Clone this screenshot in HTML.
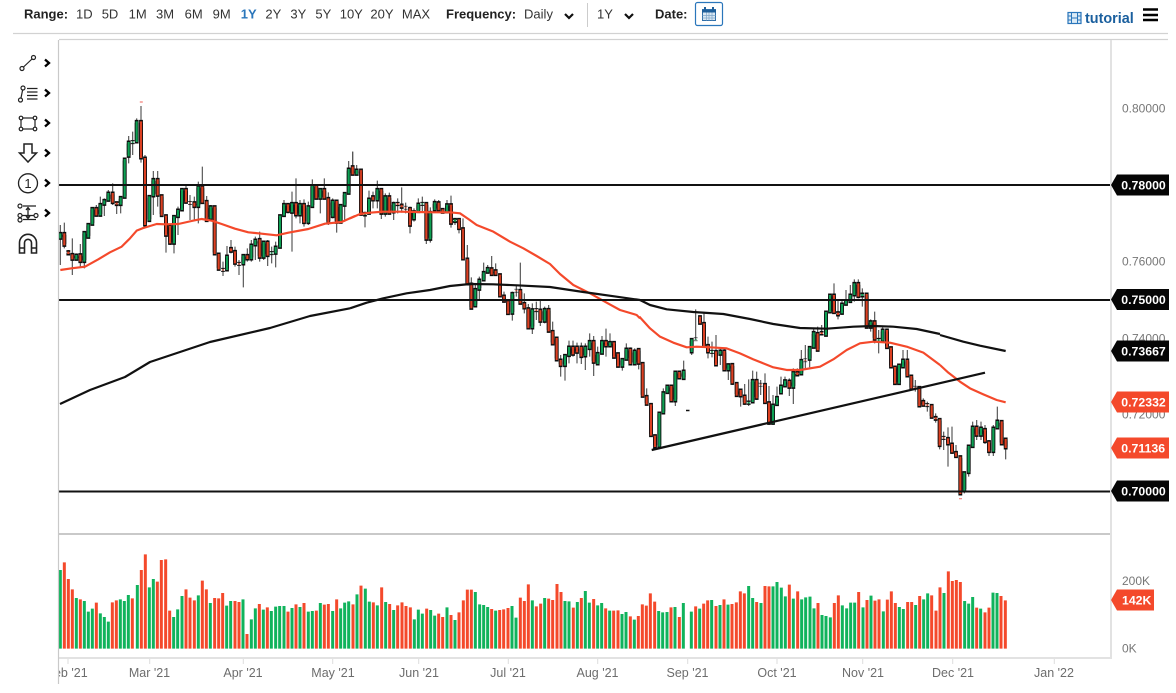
<!DOCTYPE html>
<html><head><meta charset="utf-8"><title>Chart</title>
<style>
html,body{margin:0;padding:0;background:#fff;width:1176px;height:693px;overflow:hidden}
svg{position:absolute;left:0;top:0;display:block}
text{font-family:"Liberation Sans",sans-serif}
.t{font-size:13px;fill:#333;text-anchor:middle}
.b{font-size:13px;font-weight:bold;fill:#222}
.a{font-size:12px;fill:#777}
.m{font-size:12.5px;fill:#6d6d6d;text-anchor:middle}
.w{font-size:12.3px;font-weight:bold;fill:#fff}
.i{fill:none;stroke:#222;stroke-width:1.2}
</style></head><body>
<svg width="1176" height="693" viewBox="0 0 1176 693" xmlns="http://www.w3.org/2000/svg">
<defs>
<filter id="s" x="0" y="0" width="100%" height="100%" filterUnits="userSpaceOnUse"><feGaussianBlur stdDeviation=".35"/></filter>
<g id="U" fill="none">
<path transform="translate(55 90) scale(.33333)" d="M16 430V445M64 495V508M88 427V515M100 403V442M112 355V403M136 343V376M148 331V343M160 309V331M197 322V344M209 207V322M221 156V199M233 155V158M245 94V156M283 319V392M295 268V318M357 379V460M369 360V380M381 298V360M430 290V350M467 350V386M516 498V540M565 496V522M589 465V507M601 450V465M626 456V502M650 488V491M662 471V490M675 377V472M687 343V377M711 340V367M735 343V375M760 350V398M772 287V350M796 298V325M833 333V380M857 346V397M869 310V346M881 237V310"/>
<path transform="translate(350 150) scale(.33333)" d="M20 60V73M45 190V195M57 147V190M82 118V150M106 140V190M131 160V186M192 185V207M205 162V185M217 160V163M241 187V268M254 157V180M291 164V186M315 208V215M376 418V468M388 390V418M401 367V390M413 355V367M487 430V490M547 479V534M584 478V514"/>
<path transform="translate(540 320) scale(.33333)" d="M75 106V137M87 81V107M136 81V108M149 64V86M173 100V132M186 64V100M210 67V78M247 118V139M259 87V118M284 93V132M358 279V380M370 218V279M382 198V218M406 156V243M431 153V176"/>
<path transform="translate(640 270) scale(.33333)" d="M155 208V246M167 207V209M216 244V247M241 243V253M265 284V300M326 396V400M338 331V396M399 405V460M411 382V404M423 348V369M435 332V348M460 307V352M484 271V312M509 232V268M521 187V232M558 126V196M570 75V126M606 102V130M618 93V103M631 75V95M643 40V75M667 72V78M692 155V172M716 208V212M728 180V212M777 285V341M789 270V291"/>
<path transform="translate(880 330) scale(.33333)" d="M253 428V482M266 348V428M278 291V350M303 294V316M340 294V365M352 273V294"/>
</g>
<g id="D" fill="none">
<path transform="translate(55 90) scale(.33333)" d="M28 430V466M40 485V492M52 493V508M76 494V515M124 355V376M173 309V338M185 338V344M258 94V204M270 204V405M308 268V316M320 317V377M333 377V436M345 408V460M393 298V337M405 338V340M418 338V350M442 290V338M455 334V392M479 350V492M491 492V538M504 538V541M528 475V484M540 484V520M552 520V523M577 496V507M614 448V502M638 456V497M699 343V365M723 340V375M747 343V398M784 287V325M808 298V325M820 325V398M845 333V397M893 230V253"/>
<path transform="translate(350 150) scale(.33333)" d="M33 60V193M69 140V150M94 118V190M118 140V190M143 160V164M155 165V172M167 172V174M180 175V226M229 160V268M266 158V180M278 178V187M303 164V220M327 208V236M339 236V327M352 327V402M364 402V475M425 356V374M437 362V374M450 374V438M462 438V454M474 454V491M499 421V423M511 421V460M523 460V474M535 476V534M559 479V482M571 480V514M596 478V544M608 544V582"/>
<path transform="translate(540 320) scale(.33333)" d="M50 54V120M62 120V137M99 81V103M111 81V97M124 81V110M161 64V127M198 64V78M222 67V112M234 101V139M271 87V132M296 88V130M308 130V229M320 229V253M333 253V347M345 347V381M394 198V243M418 156V174"/>
<path transform="translate(640 270) scale(.33333)" d="M180 140V160M192 160V228M204 226V246M228 244V285M253 243V300M277 283V340M290 340V377M302 360V378M314 378V400M350 331V385M362 343V345M375 343V398M387 398V460M448 333V352M472 307V315M496 270V272M533 190V241M545 187V192M582 75V128M594 128V135M655 40V80M680 72V172M704 155V208M741 180V233M753 233V291M765 291V341M802 270V318M814 318V355M826 352V354M838 352V408M850 394V406M862 404V407M875 406V442M887 442V448"/>
<path transform="translate(880 330) scale(.33333)" d="M179 268V347M191 322V325M204 325V342M216 342V367M228 367V380M241 380V492M290 291V316M315 298V335M327 335V365M365 274V342M377 327V354"/>
</g>
</defs>

<!-- frame -->
<path d="M13 33.5H1168M59 39.5H1168" stroke="#d2d2d2" stroke-width="1.2" fill="none"/>

<!-- toolbar -->
<text class="b" x="24" y="18.5">Range:</text>
<text class="t" x="84.3" y="18.5">1D</text><text class="t" x="110" y="18.5">5D</text><text class="t" x="137.7" y="18.5">1M</text><text class="t" x="165" y="18.5">3M</text><text class="t" x="193.7" y="18.5">6M</text><text class="t" x="221.7" y="18.5">9M</text>
<text class="t" x="248.7" y="18.5" style="font-weight:bold;fill:#2a76bb">1Y</text>
<text class="t" x="273.3" y="18.5">2Y</text><text class="t" x="298.3" y="18.5">3Y</text><text class="t" x="323.3" y="18.5">5Y</text><text class="t" x="351.3" y="18.5">10Y</text><text class="t" x="382" y="18.5">20Y</text><text class="t" x="416" y="18.5">MAX</text>
<text class="b" x="446" y="18.5">Frequency:</text>
<text class="t" x="538.5" y="18.5">Daily</text>
<path d="M565 14l4 4 4-4M625 14l4 4 4-4" fill="none" stroke="#111" stroke-width="2.2"/>
<path d="M587.5 3V27" stroke="#ccc" stroke-width="1"/>
<text class="t" x="605" y="18.5">1Y</text>
<text class="b" x="655" y="18.5">Date:</text>
<rect x="695.5" y="2.5" width="27" height="23" rx="2" fill="#fff" stroke="#2a76bb" stroke-width="1.2"/>
<rect x="702.5" y="9.5" width="13" height="11" fill="#dbe8f3" stroke="#2f6ea8" stroke-width="1"/>
<path d="M702 10h14v2.5h-14zM704 7h2v3h-2zM712 7h2v3h-2z" fill="#1f5f9a"/>
<path d="M702.5 15.5h13M702.5 18h13M706.5 12.5v8M709 12.5v8M712 12.5v8" stroke="#7fa6c9" stroke-width=".7" fill="none"/>

<rect x="1068" y="12.5" width="13" height="11" fill="#dcebf6" stroke="#2a76bb" stroke-width="1.2"/>
<path d="M1071.5 12.5v11M1077.5 12.5v11M1068 16h3.5M1068 20h3.5M1077.5 16h3.5M1077.5 20h3.5M1071.5 18h6" stroke="#2a76bb" stroke-width="1" fill="none"/>
<text x="1085" y="23" style="font-size:14.4px;font-weight:bold;fill:#1a5f9e">tutorial</text>
<path d="M1143 9.5h15M1143 15h15M1143 20h15" stroke="#000" stroke-width="2.6" fill="none"/>

<!-- left tools -->
<g class="i">
<circle cx="22" cy="68.5" r="2"/><circle cx="33.5" cy="57.5" r="2"/><path d="M23.5 67L32 59"/>
<circle cx="20.5" cy="100" r="2"/><circle cx="23" cy="88" r="2"/><path d="M21 98L22.6 90M27 88.5h10.5M27 92h10.5M27 95.5h10.5M27 99h10.5"/>
<rect x="21" y="118" width="14" height="11"/><circle cx="21" cy="118" r="1.8" fill="#fff"/><circle cx="35" cy="118" r="1.8" fill="#fff"/><circle cx="21" cy="129" r="1.8" fill="#fff"/><circle cx="35" cy="129" r="1.8" fill="#fff"/>
<path d="M24 144H32V153H36.5L28 162L19.5 153H24Z" stroke-width="1.5"/>
<circle cx="28" cy="183.3" r="9.5" stroke-width="1.3"/>
<circle cx="20" cy="206" r="2"/><circle cx="20" cy="215.5" r="2"/><circle cx="20" cy="220" r="2"/><circle cx="36" cy="215.5" r="2"/>
<path d="M23 206H36M23 219.5H36M22 215.5H34"/><path d="M28 208V218M26 210l2-2.5 2 2.5M26 216l2 2.5 2-2.5" stroke-width="1.3"/>
<path d="M19.5 253V242.8a8.5 8.5 0 0 1 17 0V253H31.5V242.8a3.5 3.5 0 0 0-7 0V253Z" stroke-width="1.6"/><path d="M19.5 248H24.5M31.5 248H36.5" stroke-width="1.6"/>
</g>
<text x="28" y="187.8" style="font-size:13px;fill:#222;text-anchor:middle">1</text>
<path d="M45 59.5l4 3.5-4 3.500M45 89.500l4 3.500-4 3.500M45 119.500l4 3.500-4 3.500M45 149.500l4 3.500-4 3.500M45 179.500l4 3.500-4 3.500M45 209.500l4 3.500-4 3.500" fill="none" stroke="#000" stroke-width="2.3"/>

<g filter="url(#s)">
<!-- wicks -->
<g fill="none" stroke="#555" stroke-width="3.5">
<path transform="translate(55 90) scale(.33333)" d="M16 405V525M28 398V475M40 480V495M52 445V555M64 490V512M76 462V530M88 425V535M100 400V445M112 352V405M124 345V380M136 320V380M148 325V378M160 300V335M173 280V345M185 335V372M197 320V370M209 205V325M221 138V220M233 125V195M245 85V160M258 48V218M270 195V410M283 318V395M295 243V375M308 243V350M320 317V380M333 375V488M345 405V465M357 375V490M369 350V435M381 295V362M393 288V340M405 315V390M418 320V390M430 275V400M442 230V340M455 318V395M467 345V392M479 348V495M491 490V540M504 515V558M516 468V542M528 450V490M540 470V530M552 510V555M565 495V592M577 475V515M589 450V515M601 440V510M614 425V515M626 452V510M638 450V528M650 470V520M662 455V532M675 375V475M687 330V380M699 340V370M711 305V485M723 265V385M735 330V400M747 328V410M760 335V405M772 268V353M784 282V328M796 295V370M808 265V328M820 307V405M833 325V385M845 330V428M857 342V398M869 308V395M881 213V312M893 185V255"/>
<path transform="translate(350 150) scale(.33333)" d="M8 5V75M20 45V75M33 58V197M45 185V232M57 122V192M69 125V175M82 92V175M94 115V207M106 130V200M118 128V192M131 155V210M143 145V190M155 112V188M167 158V190M180 170V250M192 175V215M205 145V188M217 140V185M229 158V282M241 172V278M254 148V185M266 150V185M278 175V190M291 150V190M303 137V233M315 205V225M327 205V250M339 205V330M352 285V405M364 382V478M376 402V472M388 380V450M401 338V392M413 345V370M425 318V376M437 340V378M450 372V440M462 425V458M474 450V493M487 425V512M499 405V440M511 338V462M523 430V490M535 462V535M547 460V552M559 455V510M571 452V528M584 470V520M596 465V548M608 515V585"/>
<path transform="translate(540 320) scale(.33333)" d="M50 53V122M62 105V170M75 102V182M87 62V130M99 62V110M111 68V130M124 68V132M136 70V150M149 40V110M161 48V168M173 80V135M186 48V102M198 26V110M210 40V82M222 65V115M234 98V142M247 115V152M259 70V120M271 82V135M284 85V135M296 85V148M308 128V232M320 205V256M333 252V350M345 345V385M358 278V382M370 205V282M382 195V220M394 195V245M406 155V258M418 152V176M431 122V180"/>
<path transform="translate(640 270) scale(.33333)" d="M155 205V255M167 118V210M180 138V162M192 130V232M204 200V265M216 215V262M228 195V288M241 232V285M253 235V302M265 280V330M277 280V345M290 338V380M302 358V410M314 342V405M326 328V408M338 302V398M350 305V390M362 330V375M375 310V400M387 348V465M399 375V465M411 350V405M423 320V372M435 320V350M448 325V378M460 295V402M472 295V318M484 240V315M496 225V300M509 228V292M521 175V235M533 170V243M545 165V195M558 125V198M570 73V128M582 40V130M594 90V148M606 90V135M618 60V105M631 45V98M643 28V95M655 28V85M667 55V110M680 70V175M692 148V185M704 125V220M716 180V250M728 172V215M741 175V235M753 230V293M765 288V345M777 282V345M789 240V293M802 240V322M814 316V358M826 330V365M838 350V410M850 385V408M862 395V425M875 402V445M887 430V458M899 445V538"/>
<path transform="translate(880 330) scale(.33333)" d="M191 305V360M204 292V410M216 290V372M228 345V382M241 378V495M253 425V490M266 345V440M278 275V352M290 270V330M303 275V330M315 285V342M327 330V378M340 285V378M352 230V296M365 272V345M377 325V388"/>
</g>
<!-- bodies -->
<g stroke="#111" stroke-width="11.5">
<use href="#U" y="-1.5"/><use href="#U" y="1.5"/><use href="#D" y="-1.5"/><use href="#D" y="1.5"/>
</g>
<use href="#U" stroke="#0ca052" stroke-width="6.5"/>
<use href="#D" stroke="#dc3f22" stroke-width="6.5"/>
</g>
<path d="M686 410.500h3.500" stroke="#111" stroke-width="1.500"/>
<path d="M139.800 102h3M959 498.700h3" stroke="#f4807a" stroke-width="1.200"/>

<!-- moving averages -->
<g fill="none" stroke="#f4492b" stroke-width="6.5" stroke-linejoin="round">
<path transform="translate(55 90) scale(.33333)" d="M16 540L50 535L90 530L130 508L165 487L200 470L225 445L245 422L262 415L285 408L305 402L330 403L370 402L410 393L440 387L470 392L500 402L540 416L580 427L620 431L665 436L700 428L760 417L810 401L860 396L900 378"/>
<path transform="translate(350 150) scale(.33333)" d="M0 205L30 192L60 188L100 185L150 185L200 186L250 187L300 187L330 190L355 207L380 225L430 245L480 275L520 295L560 318L600 342L630 372L670 405L720 430L770 458L810 480L860 495L870 505"/>
<path transform="translate(640 270) scale(.33333)" d="M-2 140L30 175L60 200L100 218L140 232L170 230L210 232L260 235L300 250L340 268L370 280L400 292L440 300L480 300L540 290L580 268L620 240L660 220L700 215L750 218L800 230L850 248L900 285"/>
<path transform="translate(880 330) scale(.33333)" d="M180 105L205 128L240 155L270 175L310 193L350 210L377 217"/>
</g>
<g fill="none" stroke="#111" stroke-width="2.2" stroke-linejoin="round">
<path d="M60 404L90 390L125 377L150 362L180 352L210 342L270 328L310 316L350 308.300"/>
<path transform="translate(350 150) scale(.33333)" stroke-width="6.600" d="M0 475L50 458L100 445L170 430L240 420L300 408L360 402L430 403L500 406L600 411L700 426L800 440L870 450"/>
<path transform="translate(640 270) scale(.33333)" stroke-width="6.600" d="M0 90L30 105L80 118L160 126L250 132L330 147L400 162L480 174L560 176L640 170L700 168L760 170L830 177L900 192"/>
<path transform="translate(880 330) scale(.33333)" stroke-width="6.600" d="M180 15L250 35L300 47L377 63"/>
<path d="M651.700 450L985 372.700"/>
<path d="M59 185H1112M59 300H1112M59 491.500H1112" stroke-width="2"/>
</g>

<!-- volume -->
<g fill="none" stroke-width="9">
<g stroke="#10b35c">
<path transform="translate(0 530) scale(.33333)" d="M181 356V120M229 356V204M253 356V213M265 356V245M277 356V236M301 356V250M313 356V261M325 356V275M361 356V208M373 356V213M385 356V195M412 356V165M448 356V172M460 356V147M521 356V261M533 356V238M546 356V198M595 356V196M631 356V219M680 356V227M692 356V213M729 356V208M754 356V268M766 356V235M790 356V239M814 356V243M827 356V230M839 356V228M852 356V228M876 356V234M900 356V231M925 356V245M937 356V243M961 356V219M998 356V243M1022 356V235M1034 356V218M1046 356V214M1071 356V193M1096 356V176M1108 356V215M1132 356V226M1157 356V216M1181 356V240"/>
<path transform="translate(395 560) scale(.33333)" d="M58 266V178M70 266V149M82 266V161M107 266V150M119 266V167M156 266V142M180 266V180M241 266V96M254 266V133M266 266V135M278 266V141M302 266V152M351 266V138M363 266V173M412 266V121M449 266V114M510 266V123M522 266V124M547 266V126M571 266V93M583 266V128M608 266V136M620 266V129M644 266V152M681 266V162M693 266V156M718 266V179"/>
<path transform="translate(640 560) scale(.33333)" d="M56 266V153M68 266V157M81 266V156M105 266V141M130 266V129M154 266V155M179 266V146M215 266V120M240 266V135M264 266V134M326 266V78M338 266V114M363 266V129M399 266V79M411 266V66M424 266V83M436 266V109M460 266V116M485 266V118M497 266V112M510 266V110M522 266V145M546 266V165M558 266V168M571 266V172M607 266V136M620 266V145M632 266V128M644 266V128M669 266V142M693 266V107M730 266V154"/>
<path transform="translate(880 530) scale(.33333)" d="M58 356V231M70 356V237M107 356V225M131 356V208M143 356V190M192 356V189M254 356V213M266 356V221M278 356V201M302 356V236M339 356V188M351 356V189"/>
</g>
<g stroke="#f4492b">
<path transform="translate(0 530) scale(.33333)" d="M193 356V97M205 356V147M217 356V178M241 356V208M289 356V218M337 356V217M349 356V211M397 356V205M424 356V120M436 356V73M472 356V155M484 356V90M497 356V88M509 356V242M558 356V178M570 356V203M583 356V211M607 356V152M619 356V178M644 356V204M656 356V205M668 356V189M705 356V213M717 356V216M741 356V312M778 356V222M802 356V232M864 356V245M888 356V223M912 356V219M949 356V242M973 356V224M985 356V222M1010 356V208M1059 356V223M1083 356V167M1120 356V217M1145 356V172M1169 356V222M1193 356V226"/>
<path transform="translate(395 560) scale(.33333)" d="M21 266V127M33 266V138M46 266V142M95 266V146M131 266V161M143 266V171M168 266V165M192 266V157M205 266V121M217 266V89M229 266V89M290 266V147M314 266V150M326 266V148M339 266V144M376 266V113M388 266V123M400 266V73M424 266V139M437 266V131M461 266V116M473 266V120M486 266V72M498 266V96M535 266V143M559 266V114M596 266V117M632 266V145M656 266V152M669 266V151M706 266V169M730 266V168"/>
<path transform="translate(640 560) scale(.33333)" d="M7 266V133M19 266V137M31 266V100M44 266V125M93 266V142M118 266V171M167 266V139M191 266V131M203 266V121M228 266V138M252 266V118M276 266V132M289 266V127M301 266V94M313 266V100M350 266V126M375 266V78M387 266V79M448 266V74M473 266V94M534 266V129M583 266V129M595 266V106M656 266V96M681 266V120M705 266V122M717 266V118M742 266V119"/>
<path transform="translate(880 530) scale(.33333)" d="M34 356V184M46 356V219M83 356V216M95 356V216M119 356V198M155 356V196M168 356V242M180 356V172M205 356V124M217 356V153M229 356V150M241 356V156M290 356V233M315 356V247M327 356V233M363 356V198M376 356V211"/>
</g>
</g>

<!-- axes -->
<path d="M59 534H1111" stroke="#c9c9c9" stroke-width="2"/>
<path d="M59 658H1111" stroke="#e2e2e2" stroke-width="2"/>
<path d="M1111 40V659" stroke="#e2e2e2" stroke-width="2"/>
<path d="M68 659v5M149.7 659v5M243.3 659v5M332.7 659v5M418.7 659v5M508.3 659v5M597.7 659v5M687.7 659v5M777 659v5M862.7 659v5M952.7 659v5M1054.3 659v5" stroke="#ddd" stroke-width="1"/>
<text class="m" x="67" y="677">Feb '21</text><text class="m" x="149.5" y="677">Mar '21</text><text class="m" x="243" y="677">Apr '21</text><text class="m" x="333" y="677">May '21</text><text class="m" x="419" y="677">Jun '21</text><text class="m" x="508" y="677">Jul '21</text><text class="m" x="597.5" y="677">Aug '21</text><text class="m" x="687.5" y="677">Sep '21</text><text class="m" x="777" y="677">Oct '21</text><text class="m" x="863" y="677">Nov '21</text><text class="m" x="953" y="677">Dec '21</text><text class="m" x="1054" y="677">Jan '22</text>
<rect x="0" y="662" width="58" height="22" fill="#fff"/>
<path d="M58.5 40V684" stroke="#c9c9c9" stroke-width="1.2"/>

<text class="a" x="1122" y="112.5">0.80000</text><text class="a" x="1122" y="265.5">0.76000</text><text class="a" x="1122" y="342.5">0.74000</text><text class="a" x="1122" y="418.5">0.72000</text>
<text class="a" x="1122" y="585">200K</text><text class="a" x="1122" y="652.5">0K</text>

<!-- tags -->
<path d="M1111 185l6-10.500h52v21h-52zM1111 299.500l6-10.500h52v21h-52zM1111 351l6-10.500h52v21h-52zM1111 491l6-10.500h52v21h-52z" fill="#050505"/>
<path d="M1111 402l6-10.500h52v21h-52zM1111 448l6-10.500h52v21h-52zM1111 600l6-10.500h37v21h-37z" fill="#f4492b"/>
<text class="w" x="1121.3" y="189.5">0.78000</text><text class="w" x="1121.3" y="304">0.75000</text><text class="w" x="1121.3" y="355.5">0.73667</text><text class="w" x="1121.3" y="406.5">0.72332</text><text class="w" x="1121.3" y="452.5">0.71136</text><text class="w" x="1121.3" y="495.5">0.70000</text><text class="w" x="1122" y="604.5">142K</text>
</svg>
</body></html>
